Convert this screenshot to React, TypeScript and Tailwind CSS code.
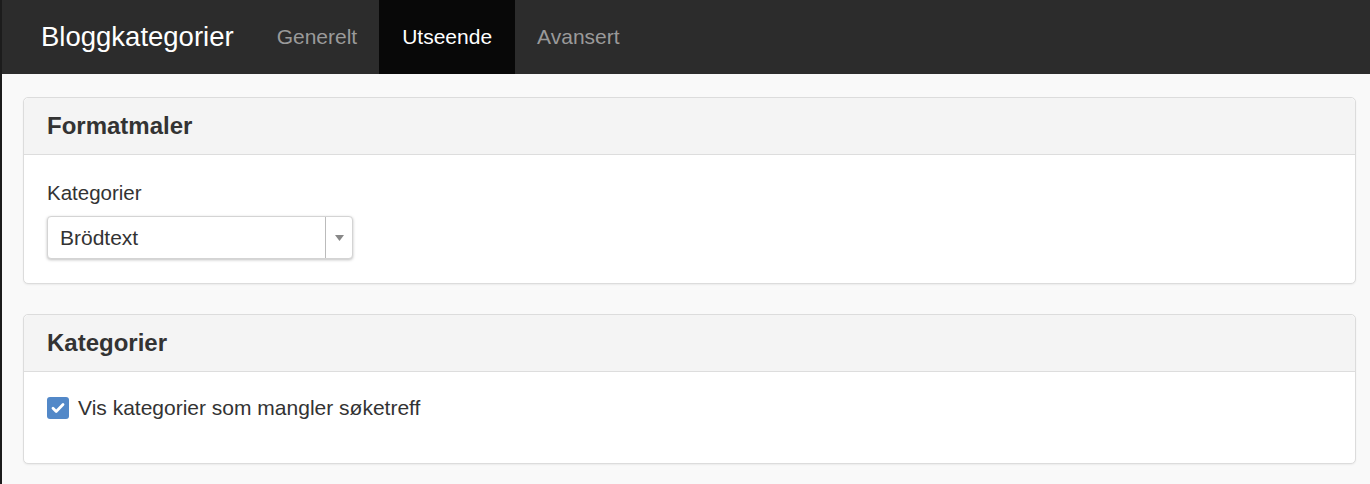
import React from "react"

const tabs = [
  { label: "Generelt", active: false },
  { label: "Utseende", active: true },
  { label: "Avansert", active: false },
]

function Panel({ title, children }: { title: string; children: React.ReactNode }) {
  return (
    <div className="rounded-[5px] border border-[#dcdcdc] bg-white shadow-[0_1px_2px_rgba(0,0,0,0.06)]">
      <div className="flex h-[57px] items-center rounded-t-[5px] border-b border-[#dddddd] bg-[#f4f4f4] px-[23px]">
        <h2 className="text-[24px] font-bold text-[#333333]">{title}</h2>
      </div>
      {children}
    </div>
  )
}

export default function App() {
  return (
    <div className="min-h-[484px] border-l-2 border-[#1c1c1c] bg-[#f9f9f9] font-['Liberation_Sans',Arial,sans-serif] text-[#333333]">
      <nav className="flex h-[74px] items-stretch bg-[#2c2c2c] pl-[39px]">
        <div className="flex items-center pr-[21px] text-[27.5px] text-white">Bloggkategorier</div>
        {tabs.map((t) => (
          <div
            key={t.label}
            className={
              t.active
                ? "flex items-center bg-[#080808] px-[23px] text-[21px] text-white"
                : "flex items-center px-[22px] text-[21px] text-[#9a9a9a]"
            }
          >
            {t.label}
          </div>
        ))}
      </nav>

      <main className="flex flex-col gap-[30px] pl-[21px] pr-[14px] pt-[23px]">
        <Panel title="Formatmaler">
          <div className="px-[23px] pb-[24px] pt-[26px]">
            <label className="block text-[20.5px] leading-[24px]">Kategorier</label>
            <div className="mt-[11px] flex h-[43px] w-[306px] items-stretch rounded-[4px] border border-[#d4d4d4] bg-white shadow-[0_1px_3px_rgba(0,0,0,0.25)]">
              <div className="flex flex-1 items-center px-[12px] text-[21px]">Brödtext</div>
              <div className="flex w-[27px] items-center justify-center border-l border-[#bbbbbb]">
                <svg width="9" height="6" viewBox="0 0 9 6">
                  <path d="M0 0h9L4.5 6z" fill="#888888" />
                </svg>
              </div>
            </div>
          </div>
        </Panel>

        <Panel title="Kategorier">
          <div className="flex items-center gap-[9px] px-[23px] pb-[44px] pt-[25px]">
            <span className="flex h-[22px] w-[22px] items-center justify-center rounded-[3px] bg-[#5288c8]">
              <svg width="14" height="12" viewBox="0 0 14 12">
                <path d="M2 6.2l3.2 3.2L12 2.6" fill="none" stroke="#ffffff" strokeWidth="2.8" strokeLinecap="round" strokeLinejoin="round" />
              </svg>
            </span>
            <span className="text-[21px] leading-[22px]">Vis kategorier som mangler søketreff</span>
          </div>
        </Panel>
      </main>
    </div>
  )
}
